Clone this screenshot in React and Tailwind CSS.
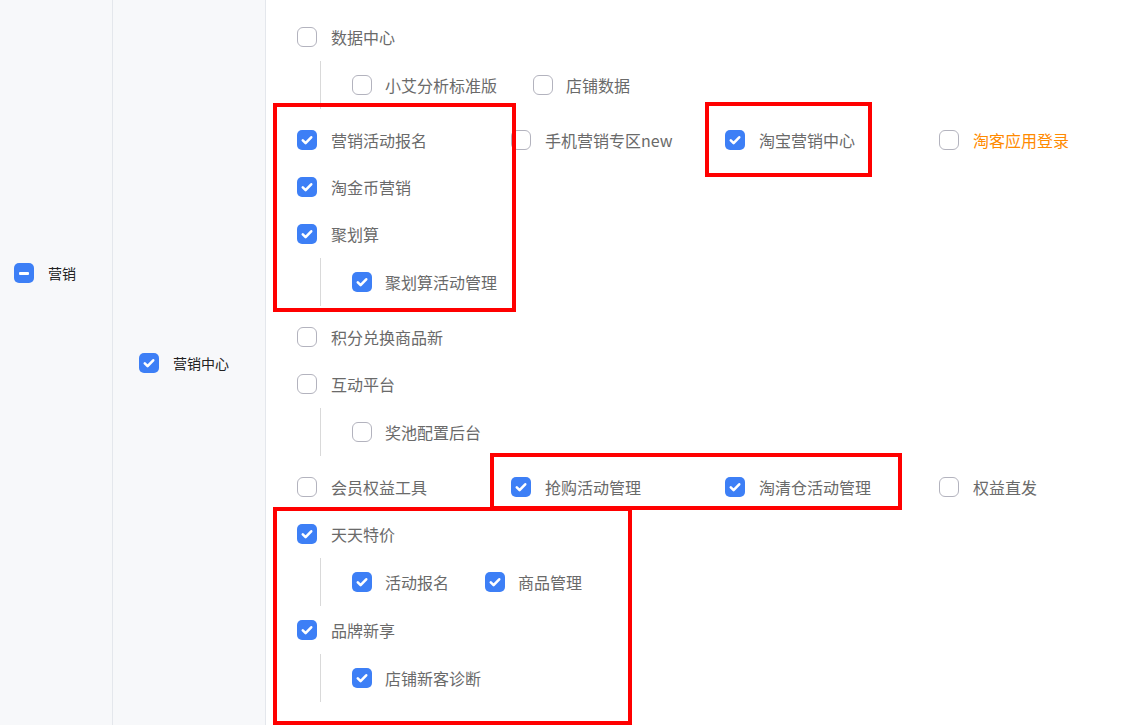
import React from "react";

const FONT = { fontFamily: '"Noto Sans CJK SC", "Noto Sans", sans-serif' };

function Box({ state }) {
  if (state === "checked") {
    return (
      <span className="flex h-[20px] w-[20px] shrink-0 items-center justify-center rounded-[5px] bg-[#3d7ff6]">
        <svg width="20" height="20" viewBox="0 0 20 20" fill="none">
          <path d="M5.8 10.4 L8.6 13.1 L14.2 7.3" stroke="#ffffff" strokeWidth="2.6" strokeLinecap="round" strokeLinejoin="round" />
        </svg>
      </span>
    );
  }
  if (state === "indeterminate") {
    return (
      <span className="flex h-[20px] w-[20px] shrink-0 items-center justify-center rounded-[5px] bg-[#3d7ff6]">
        <span className="block h-[3px] w-[10px] rounded-[1px] bg-white" />
      </span>
    );
  }
  return <span className="block h-[20px] w-[20px] shrink-0 rounded-[6px] border border-[#b3b3be] bg-white" />;
}

function Item({ label, checked, orange, child }) {
  return (
    <div className={"flex items-center " + (child ? "gap-[13px]" : "gap-[14px]")}>
      <Box state={checked ? "checked" : "none"} />
      <span className={"whitespace-nowrap text-[16px] leading-none " + (orange ? "text-[#ff8a00]" : "text-[#6a6a6a]")}>
        {label}
      </span>
    </div>
  );
}

const tree = [
  { type: "parent", label: "数据中心", checked: false, children: [
    { label: "小艾分析标准版", checked: false },
    { label: "店铺数据", checked: false },
  ] },
  { type: "leaves", items: [
    { label: "营销活动报名", checked: true },
    { label: "手机营销专区new", checked: false },
    { label: "淘宝营销中心", checked: true },
    { label: "淘客应用登录", checked: false, orange: true },
    { label: "淘金币营销", checked: true },
  ] },
  { type: "parent", label: "聚划算", checked: true, children: [
    { label: "聚划算活动管理", checked: true },
  ] },
  { type: "leaves", items: [{ label: "积分兑换商品新", checked: false }] },
  { type: "parent", label: "互动平台", checked: false, children: [
    { label: "奖池配置后台", checked: false },
  ] },
  { type: "leaves", items: [
    { label: "会员权益工具", checked: false },
    { label: "抢购活动管理", checked: true },
    { label: "淘清仓活动管理", checked: true },
    { label: "权益直发", checked: false },
  ] },
  { type: "parent", label: "天天特价", checked: true, children: [
    { label: "活动报名", checked: true },
    { label: "商品管理", checked: true },
  ] },
  { type: "parent", label: "品牌新享", checked: true, children: [
    { label: "店铺新客诊断", checked: true },
  ] },
];

function Group({ node }) {
  if (node.type === "leaves") {
    return (
      <div className="mt-[7px] grid grid-cols-[214px_214px_214px_214px] auto-rows-[47px] items-center">
        {node.items.map((it) => (
          <Item key={it.label} {...it} />
        ))}
      </div>
    );
  }
  return (
    <div className="flex flex-col">
      <div className="flex h-[48px] items-center">
        <Item label={node.label} checked={node.checked} />
      </div>
      <div className="ml-[23px] flex h-[48px] items-center gap-x-[36px] border-l border-[#d9d9d9] pl-[31px]">
        {node.children.map((c) => (
          <Item key={c.label} {...c} child />
        ))}
      </div>
    </div>
  );
}

function Frame({ className }) {
  return <div className={"pointer-events-none absolute border-[4px] border-[#ff0000] " + className} />;
}

export default function App() {
  return (
    <div className="relative flex h-[725px] w-[1130px] overflow-hidden bg-white" style={FONT}>
      <div className="flex w-[113px] shrink-0 flex-col justify-center border-r border-[#e4e7ec] bg-[#f7f8fa] pb-[179px] pl-[14px]">
        <div className="flex items-center gap-[14px]">
          <Box state="indeterminate" />
          <span className="text-[14px] leading-none text-[#222222]">营销</span>
        </div>
      </div>
      <div className="flex w-[153px] shrink-0 flex-col justify-center border-r border-[#e4e7ec] bg-[#f7f8fa] pl-[26px]">
        <div className="flex items-center gap-[14px]">
          <Box state="checked" />
          <span className="text-[14px] leading-none text-[#222222]">营销中心</span>
        </div>
      </div>
      <div className="flex flex-1 flex-col pl-[31px] pt-[13px]">
        {tree.map((node, i) => (
          <Group key={i} node={node} />
        ))}
      </div>

      <Frame className="left-[273px] top-[103px] h-[209px] w-[243px]" />
      <Frame className="left-[705px] top-[102px] h-[75px] w-[167px]" />
      <Frame className="left-[490px] top-[453px] h-[57px] w-[412px]" />
      <Frame className="left-[273px] top-[507px] h-[218px] w-[359px]" />
    </div>
  );
}
